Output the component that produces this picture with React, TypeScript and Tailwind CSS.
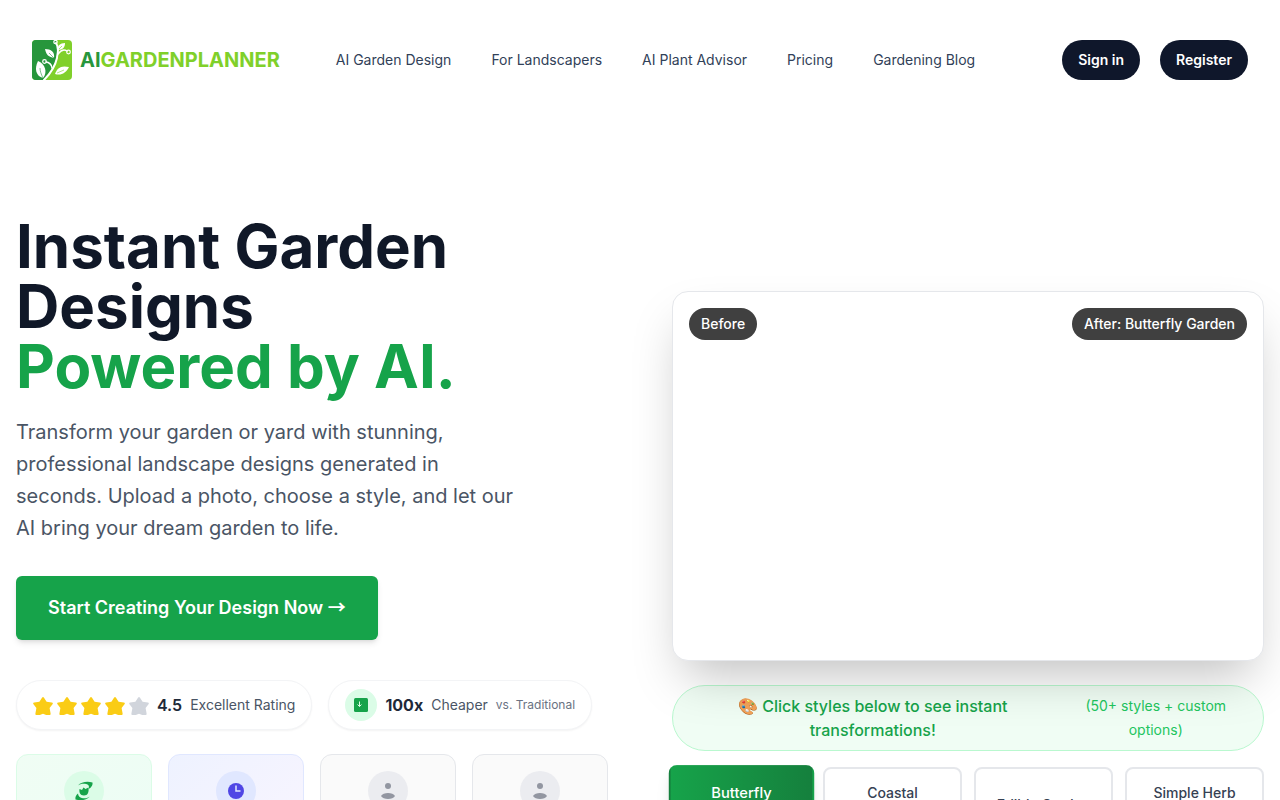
import type { ReactNode } from "react";
import { twMerge as tw } from "tailwind-merge";

const navLinks = [
  "AI Garden Design",
  "For Landscapers",
  "AI Plant Advisor",
  "Pricing",
  "Gardening Blog",
];

const gardenStyles = [
  { name: "Butterfly Garden", active: true },
  { name: "Coastal Garden", active: false },
  { name: "Edible Garden", active: false },
  { name: "Simple Herb Garden", active: false },
];

function Logo() {
  return (
    <a href="#" className="flex items-center gap-2">
      <svg viewBox="0 0 40 40" className="size-10" aria-hidden="true">
        <defs>
          <clipPath id="logo-tile">
            <rect width="40" height="40" rx="4" />
          </clipPath>
        </defs>
        <g clipPath="url(#logo-tile)">
          <rect width="40" height="40" fill="#80d02a" />
          <path d="M0 0H24C25 6 27 9 25 15C24 22 20 30 11 40H0Z" fill="#27963c" />
          <g fill="none" stroke="#fff" strokeLinecap="round">
            <path d="M24 3C28 9 25 14 25 18C23 27 19 33 12 40" strokeWidth="2" />
            <path d="M26 14C29 10 32 9 35 11" strokeWidth="1.5" />
            <path d="M20 28C20 25 17 22 14 22" strokeWidth="1.5" />
            <circle cx="23.5" cy="2" r="1.7" strokeWidth="1.2" />
            <circle cx="36.5" cy="12" r="1.8" strokeWidth="1.2" />
            <circle cx="12.5" cy="21.5" r="1.8" strokeWidth="1.2" />
          </g>
          <g fill="#fff">
            <path d="M6 21C13 24 16 32 11 38C4 36 2 29 6 21Z" />
            <path d="M13 9C19 9 23 12 22 18C17 17 14 15 13 9Z" />
            <path d="M26 10C25 6 28 3 33 3C33 7 31 10 26 10Z" />
            <path d="M23 34C25 28 29 25 37 27C34 33 29 36 23 34Z" />
          </g>
          <g fill="none" strokeWidth="0.6">
            <path d="M8 28C8 31 9 34 11 38" stroke="#27963c" />
            <path d="M17 13L22 18" stroke="#27963c" />
            <path d="M25 33L32 30M27 9L30 6" stroke="#80d02a" />
          </g>
        </g>
      </svg>
      <span className="text-xl font-bold text-[#80d02a]">
        <span className="text-[#27963c]">AI</span>GARDENPLANNER
      </span>
    </a>
  );
}

function Star({ filled }: { filled: boolean }) {
  return (
    <svg
      viewBox="0 -2 20 20"
      aria-hidden="true"
      className={tw("size-5", filled ? "text-[#facc15]" : "text-gray-300")}
    >
      <path
        fill="currentColor"
        d="M9 .8Q10 -.6 11 .8L13.6 4.8L18.8 5.6Q20.6 6 19.3 7.4L16.6 11L17.6 16.5Q17.7 18 16.9 18H13.2L10 16.8L6.8 18H3.1Q2.3 18 2.4 16.5L3.4 11L.7 7.4Q-.6 6 1.2 5.6L6.4 4.8Z"
      />
    </svg>
  );
}

function PersonIcon() {
  return (
    <svg viewBox="0 0 20 20" className="size-5" fill="currentColor" aria-hidden="true">
      <circle cx="10" cy="5" r="3" />
      <path d="M3 15C5 11 15 11 17 15C15 19 5 19 3 15Z" />
    </svg>
  );
}

function StatCard({ card, circle, children }: { card: string; circle: string; children: ReactNode }) {
  return (
    <div className={tw("flex h-32 flex-col items-center rounded-xl border p-4", card)}>
      <div className={tw("flex size-10 items-center justify-center rounded-full", circle)}>
        {children}
      </div>
    </div>
  );
}

function Badge({ children }: { children: ReactNode }) {
  return (
    <div className="flex items-center gap-2 rounded-full border border-gray-100 bg-white px-4 py-2 shadow-xs">
      {children}
    </div>
  );
}

export default function App() {
  return (
    <div className="min-h-screen overflow-hidden bg-white font-['Inter',sans-serif] text-gray-900">
      <header className="flex items-center px-8 py-10">
        <Logo />
        <nav className="ml-14 flex flex-1 gap-10 text-sm text-slate-700">
          {navLinks.map((link) => (
            <a key={link} href="#">
              {link}
            </a>
          ))}
        </nav>
        <div className="flex gap-5 text-sm font-semibold text-white">
          <button className="h-10 rounded-full bg-slate-900 px-4">Sign in</button>
          <button className="h-10 rounded-full bg-slate-900 px-4">Register</button>
        </div>
      </header>

      <main className="grid grid-cols-2 items-center gap-16 px-4 pt-24">
        <section>
          <h1 className="text-6xl leading-none font-bold text-gray-900">
            Instant Garden Designs
            <span className="block text-[#16a34a]">Powered by AI.</span>
          </h1>
          <p className="mt-5 max-w-lg text-xl leading-8 text-gray-600">
            Transform your garden or yard with stunning, professional landscape designs generated in
            seconds. Upload a photo, choose a style, and let our AI bring your dream garden to life.
          </p>
          <button className="mt-8 h-16 rounded-md bg-[#16a34a] px-8 text-lg font-semibold text-white shadow-md">
            Start Creating Your Design Now{" "}
            <span className="font-['Noto_Sans_CJK_JP',sans-serif] leading-none">→</span>
          </button>

          <div className="mt-10 flex gap-4">
            <Badge>
              <div className="flex gap-1">
                {[1, 2, 3, 4, 5].map((n) => (
                  <Star key={n} filled={n < 5} />
                ))}
              </div>
              <span className="font-semibold text-gray-800">4.5</span>
              <span className="text-sm text-gray-600">Excellent Rating</span>
            </Badge>
            <Badge>
              <span className="flex size-8 items-center justify-center rounded-full bg-green-100">
                <svg viewBox="0 0 14 14" className="size-3.5" aria-hidden="true">
                  <rect width="14" height="14" rx="1.5" fill="#16a34a" />
                  <path d="M5.5 3.5V8.5M3.5 6.5L5.5 8.5L7.5 6.5" fill="none" stroke="#dcfce7" />
                </svg>
              </span>
              <span className="font-bold text-gray-800">100x</span>
              <span className="text-sm text-gray-600">Cheaper</span>
              <span className="text-xs text-gray-500">vs. Traditional</span>
            </Badge>
          </div>

          <div className="mt-6 grid grid-cols-4 gap-4">
            <StatCard
              card="border-green-100 bg-linear-to-br from-green-50 to-emerald-50"
              circle="bg-green-100 text-[#16a34a]"
            >
              <svg viewBox="0 0 20 20" className="size-5" fill="currentColor" aria-hidden="true">
                <path d="M4 4.5C7 1 13 0 18.5 1.5C19 4 17 7 14.5 8C16 5 14 3 11 2.8C8 2.5 6 3 4 4.5Z" />
                <path d="M16 15.5C13 19 7 20 1.5 18.5C1 16 2 14 4 12.5C4 15 6 17 9 17.2C12 17.5 14 17 16 15.5Z" />
                <path d="M5.5 8L8 9L9.5 6.5L11.5 8L14.5 6.5C15 11 14 14.5 10 14.5C6 14.5 5 11 5.5 8Z" />
              </svg>
            </StatCard>
            <StatCard
              card="border-indigo-100 bg-linear-to-br from-indigo-50 to-purple-50"
              circle="bg-indigo-100 text-[#4f46e5]"
            >
              <svg viewBox="0 0 20 20" className="size-5" aria-hidden="true">
                <circle cx="10" cy="10" r="8" fill="currentColor" />
                <path d="M10 4.5V10H14.5" fill="none" stroke="#e0e7ff" strokeWidth="1.5" />
              </svg>
            </StatCard>
            <StatCard card="border-gray-200 bg-[#fafafa]" circle="bg-[#ebecf0] text-[#9296a1]">
              <PersonIcon />
            </StatCard>
            <StatCard card="border-gray-200 bg-[#fafafa]" circle="bg-[#ebecf0] text-[#9296a1]">
              <PersonIcon />
            </StatCard>
          </div>
        </section>

        <section className="self-start pt-[75px]">
          {/* z-10 lets the preview's shadow fall over the hint below it */}
          <div className="relative z-10 flex h-[370px] items-start justify-between rounded-2xl border border-gray-200 bg-white p-4 text-sm font-medium text-white shadow-2xl">
            <span className="rounded-full bg-[#404040] px-3 py-1.5">Before</span>
            <span className="rounded-full bg-[#404040] px-3 py-1.5">After: Butterfly Garden</span>
          </div>

          <div className="mt-6 flex items-center justify-center gap-2 rounded-full border border-green-200 bg-green-50 px-4 py-2 text-center">
            <p className="font-medium text-[#16a34a]">
              🎨 Click styles below to see instant transformations!
            </p>
            <p className="text-sm leading-6 text-[#22c55e]">(50+ styles + custom options)</p>
          </div>

          <div className="mt-4 grid grid-cols-4 gap-3">
            {gardenStyles.map(({ name, active }) => (
              <button
                key={name}
                className={tw(
                  "rounded-lg border-2 border-gray-200 bg-white px-4 py-3 text-sm leading-6 font-medium text-gray-700",
                  active &&
                    "scale-105 border-transparent bg-linear-to-r from-[#16a34a] to-[#15803d] text-white shadow-lg"
                )}
              >
                {name}
              </button>
            ))}
          </div>
        </section>
      </main>
    </div>
  );
}
